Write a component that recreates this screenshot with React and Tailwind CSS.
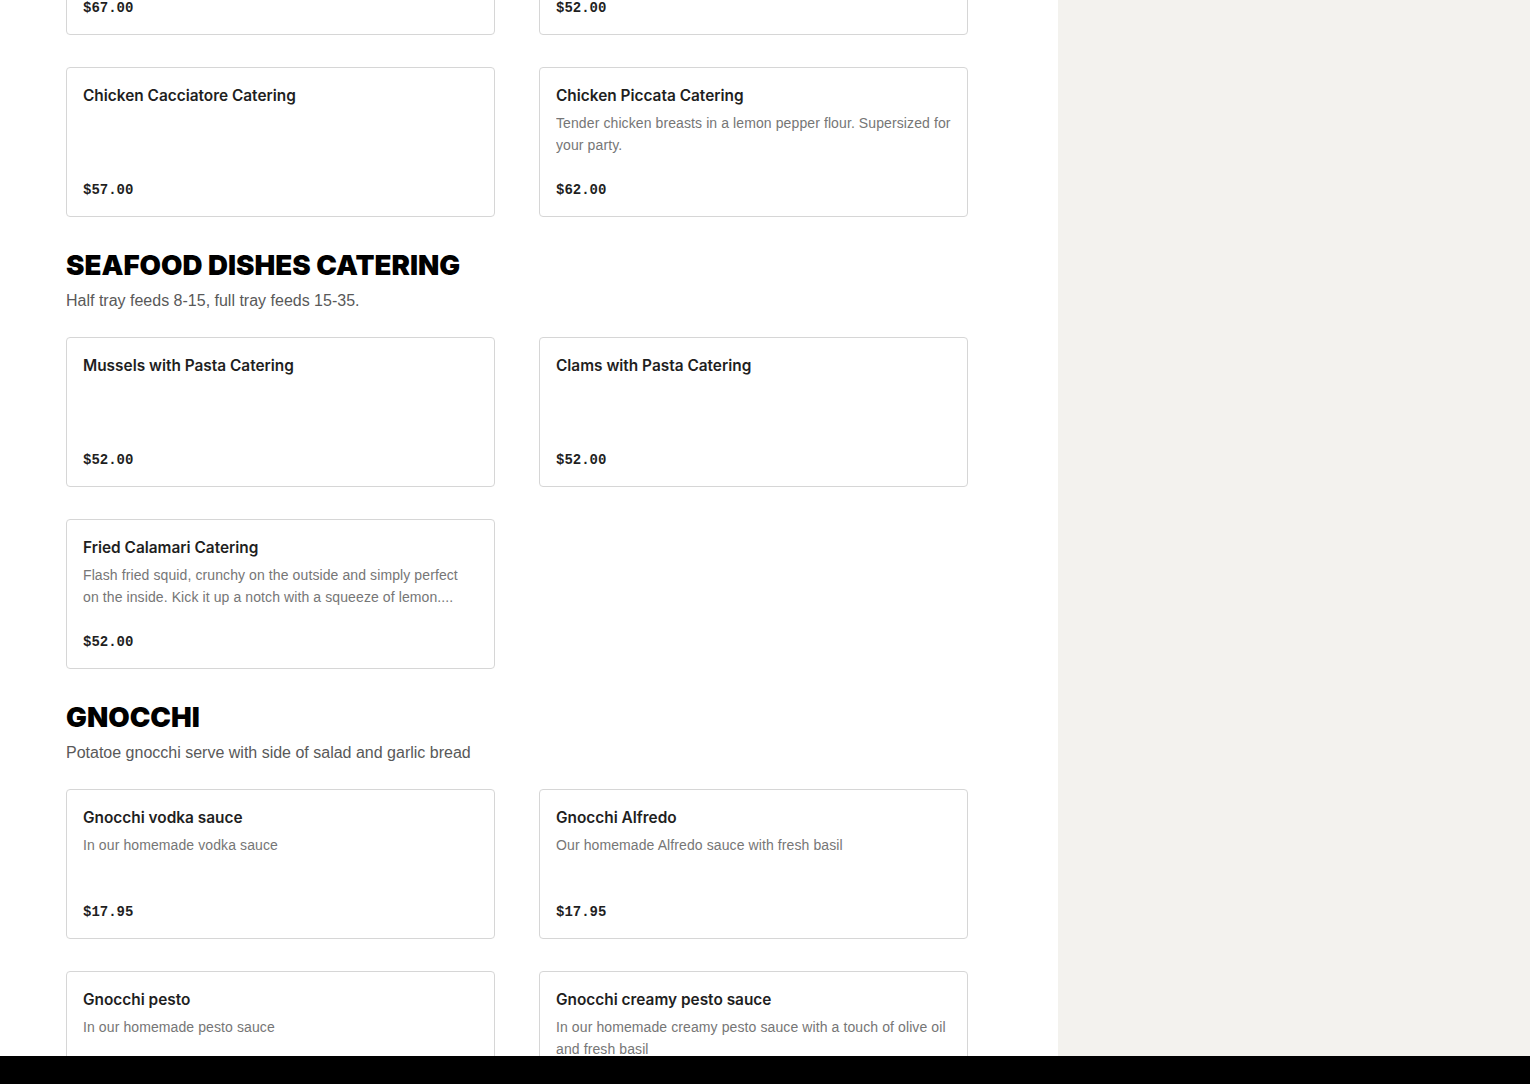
import React from "react";

const sections = [
  {
    title: null,
    items: [
      { name: "Chicken Marsala Catering", desc: "", price: "$67.00" },
      { name: "Chicken Francese Catering", desc: "", price: "$52.00" },
      { name: "Chicken Cacciatore Catering", desc: "", price: "$57.00" },
      {
        name: "Chicken Piccata Catering",
        desc: "Tender chicken breasts in a lemon pepper flour. Supersized for your party.",
        price: "$62.00",
      },
    ],
  },
  {
    title: "SEAFOOD DISHES CATERING",
    sub: "Half tray feeds 8-15, full tray feeds 15-35.",
    items: [
      { name: "Mussels with Pasta Catering", desc: "", price: "$52.00" },
      { name: "Clams with Pasta Catering", desc: "", price: "$52.00" },
      {
        name: "Fried Calamari Catering",
        desc: "Flash fried squid, crunchy on the outside and simply perfect on the inside. Kick it up a notch with a squeeze of lemon....",
        narrow: true,
        price: "$52.00",
      },
    ],
  },
  {
    title: "GNOCCHI",
    sub: "Potatoe gnocchi serve with side of salad and garlic bread",
    items: [
      { name: "Gnocchi vodka sauce", desc: "In our homemade vodka sauce", price: "$17.95" },
      { name: "Gnocchi Alfredo", desc: "Our homemade Alfredo sauce with fresh basil", price: "$17.95" },
      { name: "Gnocchi pesto", desc: "In our homemade pesto sauce", price: "$17.95" },
      {
        name: "Gnocchi creamy pesto sauce",
        desc: "In our homemade creamy pesto sauce with a touch of olive oil and fresh basil",
        price: "$17.95",
      },
    ],
  },
];

function Card({ item }) {
  return (
    <div className="h-[150px] rounded-[4px] border border-[#d6d6d6] bg-white p-4 flex flex-col">
      <div
        className="text-[15.4px] leading-6 font-semibold text-[#1f1f1f]"
        style={{ fontFamily: 'Inter, "Liberation Sans", sans-serif' }}
      >
        {item.name}
      </div>
      {item.desc ? (
        <div
          className={
            "mt-1 text-[14px] leading-[22px] tracking-[0.1px] text-[#767676] line-clamp-2 " +
            (item.narrow ? "max-w-[385px]" : "")
          }
        >
          {item.desc}
        </div>
      ) : null}
      <div
        className="mt-auto text-[14px] leading-5 font-bold text-[#1f1f1f]"
        style={{ fontFamily: '"Liberation Mono", "DejaVu Sans Mono", monospace' }}
      >
        {item.price}
      </div>
    </div>
  );
}

export default function App() {
  return (
    <div
      className="w-[1530px] h-[1084px] flex flex-col overflow-hidden bg-white"
      style={{ fontFamily: '"Liberation Sans", Arial, sans-serif' }}
    >
      <div className="flex h-[1056px] overflow-hidden">
        <div className="w-[1058px] shrink-0 bg-white pl-[66px]">
          <div className="w-[902px] mt-[-115px] flex flex-col gap-8">
            {sections.map((s, i) => (
              <section key={i}>
                {s.title ? (
                  <>
                    <h2
                      className="text-[27.7px] leading-8 font-black text-black"
                      style={{ fontFamily: 'Inter, "Liberation Sans", sans-serif' }}
                    >
                      {s.title}
                    </h2>
                    <p className="mt-2 mb-6 text-[16px] leading-6 text-[#595959]">{s.sub}</p>
                  </>
                ) : null}
                <div className="grid grid-cols-2 gap-x-11 gap-y-8">
                  {s.items.map((it, j) => (
                    <Card key={j} item={it} />
                  ))}
                </div>
              </section>
            ))}
          </div>
        </div>
        <div className="flex-1 bg-[#f3f2ee]" />
      </div>
      <div className="h-[28px] bg-black shrink-0" />
    </div>
  );
}
